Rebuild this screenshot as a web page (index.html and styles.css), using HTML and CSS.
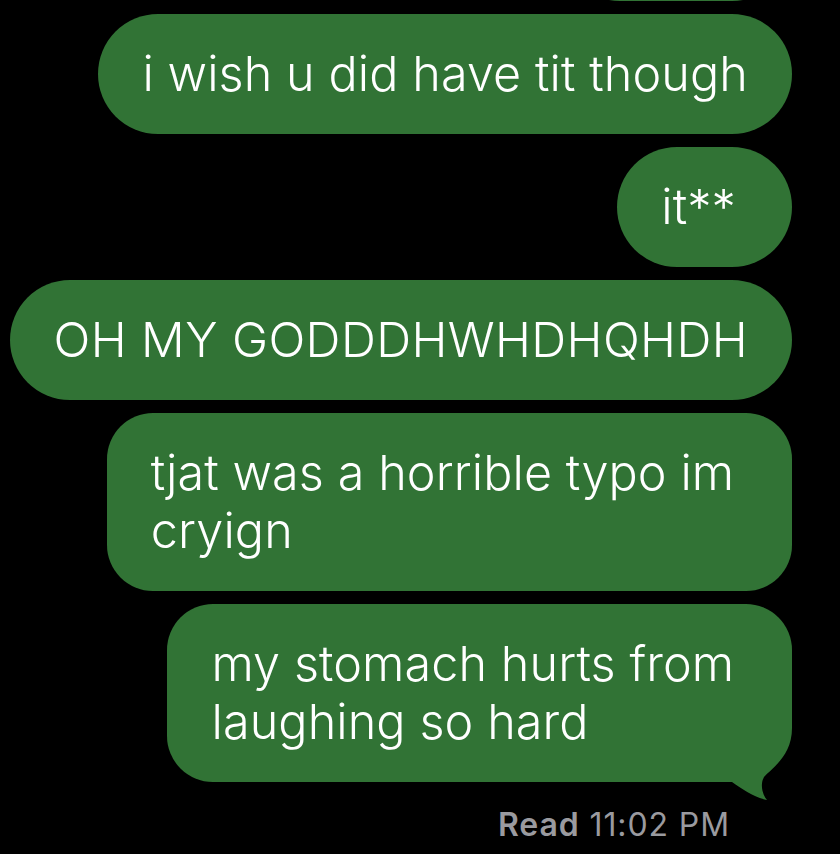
FILE: index.html
```html
<!DOCTYPE html>
<html lang="en">
<head>
<meta charset="utf-8">
<title>Messages</title>
<link rel="stylesheet" href="styles.css">
</head>
<body>
<main class="thread">
  <div class="bubble bubble-prev" aria-hidden="true"></div>
  <div class="bubble">i wish u did have tit though</div>
  <div class="bubble short">it**</div>
  <div class="bubble caps">OH MY GODDDHWHDHQHDH</div>
  <div class="bubble multi">tjat was a horrible typo im&nbsp;<br>cryign</div>
  <div class="bubble multi tailed">my stomach hurts from&nbsp;<br>laughing so hard
    <svg class="tail" width="70" height="90" viewBox="0 0 70 90" aria-hidden="true">
      <rect x="0" y="0" width="63" height="70" fill="#000"/>
      <path d="M0,0 L62,0 L62,16 C62,44 42,56 34,65 C30,72 32,82 37,88 C25,86 12,77 2,70 L0,70 Z" fill="#317335"/>
    </svg>
  </div>
  <div class="receipt"><span class="read">Read</span> 11:02 PM</div>
</main>
</body>
</html>
```
FILE: styles.css
```css
html, body {
  margin: 0;
  padding: 0;
  background: #000;
}
body {
  width: 840px;
  height: 854px;
  overflow: hidden;
  font-family: Inter, "Noto Sans", sans-serif;
}
.thread {
  display: flex;
  flex-direction: column;
  align-items: flex-end;
  gap: 13px;
  padding-right: 48px;
}
.bubble {
  position: relative;
  background: #317335;
  color: #fff;
  font-size: 48.5px;
  font-weight: 350;
  line-height: 58px;
  padding: 31px 44px;
  border-radius: 60px;
  white-space: nowrap;
  letter-spacing: 0.1px;
}
.bubble.short {
  padding-left: 44px;
  padding-right: 56px;
  letter-spacing: 0.1px;
}
.bubble.caps {
  letter-spacing: 0.4px;
}
.bubble-prev {
  width: 144px;
  height: 58px;
  margin-top: -119px;
}
.bubble.multi {
  border-radius: 46px;
}
.bubble.tailed {
  border-bottom-right-radius: 0;
}
.tail {
  position: absolute;
  right: -8px;
  bottom: -20px;
  display: block;
}
.receipt {
  margin-top: 11px;
  margin-right: 62px;
  color: #9a9a9f;
  font-size: 32px;
  letter-spacing: 0.9px;
  line-height: 37px;
}
.read {
  font-weight: 600;
}
```
